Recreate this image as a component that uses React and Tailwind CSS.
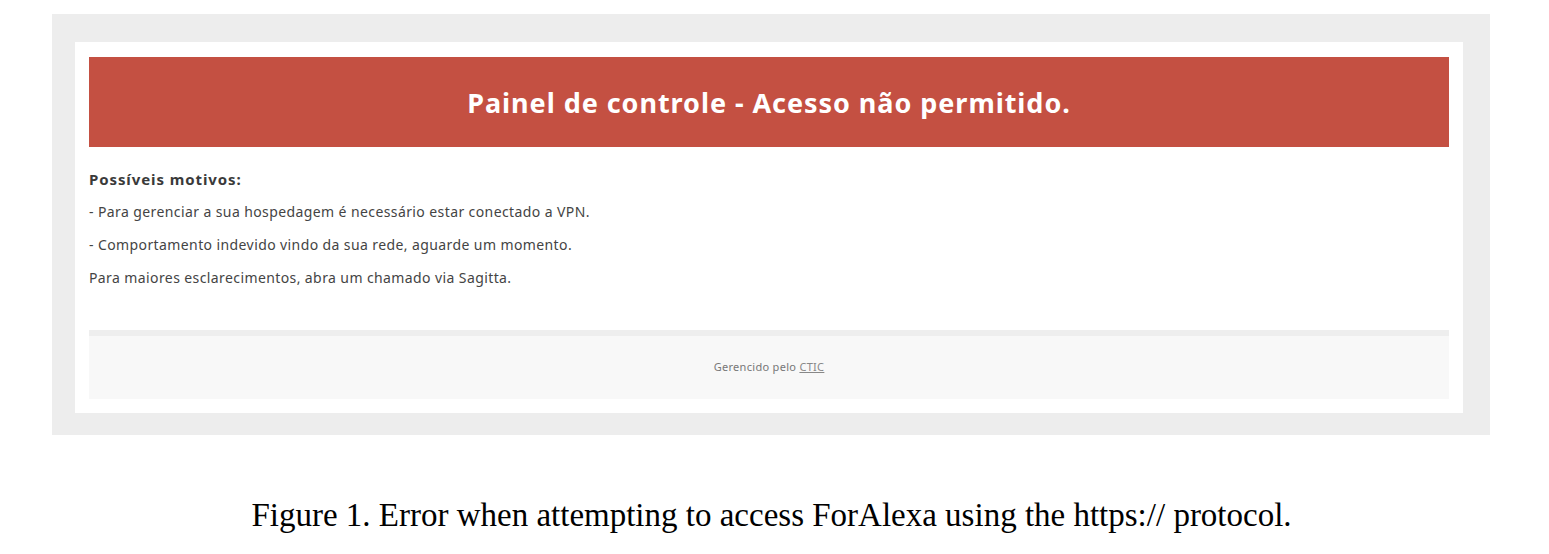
export default function App() {
  const sans = { fontFamily: '"Noto Sans", "Open Sans", sans-serif' };
  return (
    <div className="w-[1549px] h-[554px] bg-white overflow-hidden">
      <div className="ml-[52px] mt-[14px] w-[1438px] bg-[#ededed] pt-[28px] pl-[23px] pr-[27px] pb-[22px]">
        <div className="bg-white px-[14px] pt-[15px] pb-[14px]" style={sans}>
          <div className="h-[90px] bg-[#c45042] flex items-center justify-center">
            <h1 className="text-white font-bold text-[27px] tracking-[0.95px] leading-none">
              Painel de controle - Acesso não permitido.
            </h1>
          </div>
          <div className="text-[#444] pt-[23px] pb-[43px]">
            <p className="font-bold text-[15px] tracking-[0.9px] leading-[18px] text-[#3a3a3a]">Possíveis motivos:</p>
            <p className="text-[14px] tracking-[0.4px] leading-[18px] mt-[15px]">- Para gerenciar a sua hospedagem é necessário estar conectado a VPN.</p>
            <p className="text-[14px] tracking-[0.4px] leading-[18px] mt-[15px]">- Comportamento indevido vindo da sua rede, aguarde um momento.</p>
            <p className="text-[14px] tracking-[0.4px] leading-[18px] mt-[15px]">Para maiores esclarecimentos, abra um chamado via Sagitta.</p>
          </div>
          <div className="border-t-[6px] border-[#eeeeee] bg-[#f8f8f8] h-[69px] flex items-center justify-center">
            <p className="text-[11px] tracking-[0.3px] text-[#777]">
              Gerencido pelo <a className="underline text-[#888]">CTIC</a>
            </p>
          </div>
        </div>
      </div>
      <p
        className="text-center text-[33px] leading-none text-black mt-[64px] pr-[6px]"
        style={{ fontFamily: '"Liberation Serif", "Times New Roman", serif' }}
      >
        Figure 1. Error when attempting to access ForAlexa using the https:// protocol.
      </p>
    </div>
  );
}
